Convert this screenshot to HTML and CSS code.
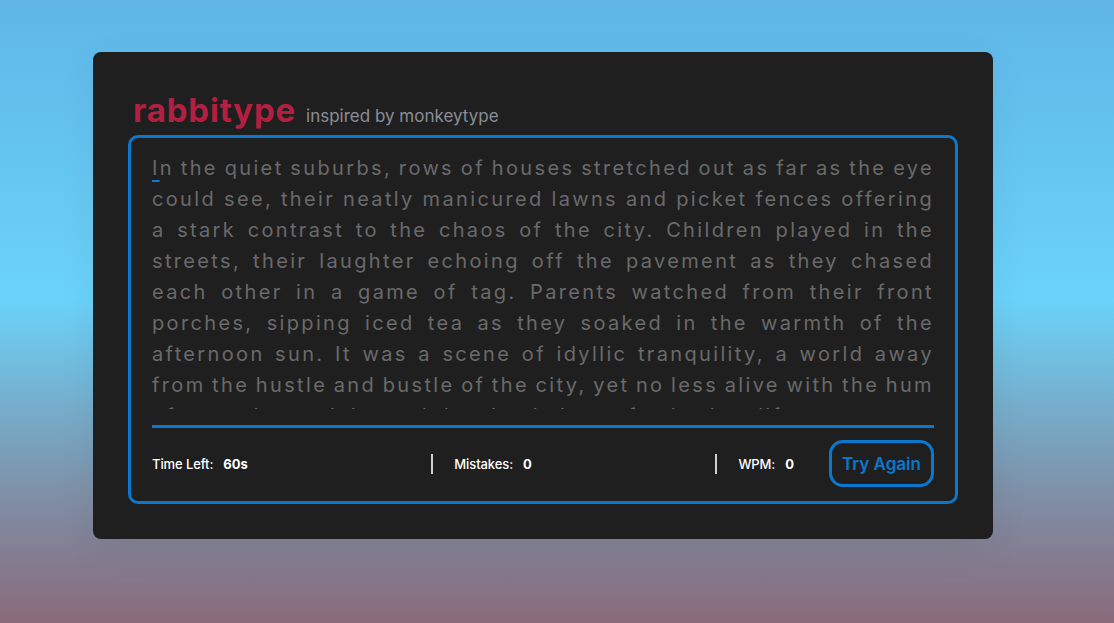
FILE: index.html
```html
<!DOCTYPE html>
<html lang="en">
<head>
<meta charset="utf-8">
<title>rabbitype</title>
<link rel="stylesheet" href="styles.css">
</head>
<body>
<div class="wrapper">
  <header class="brand">
    <h1 class="logo">rabbitype</h1>
    <span class="tagline">inspired by monkeytype</span>
  </header>
  <div class="typing-box">
    <div class="text-area">
      <p class="quote"><span class="active">I</span>n the quiet suburbs, rows of houses stretched out as far as the eye could see, their neatly manicured lawns and picket fences offering a stark contrast to the chaos of the city. Children played in the streets, their laughter echoing off the pavement as they chased each other in a game of tag. Parents watched from their front porches, sipping iced tea as they soaked in the warmth of the afternoon sun. It was a scene of idyllic tranquility, a world away from the hustle and bustle of the city, yet no less alive with the hum of everyday activity and the simple joys of suburban life.</p>
    </div>
    <div class="divider"></div>
    <div class="content">
      <ul class="result-details">
        <li class="stat"><span class="label">Time Left:</span><b class="value">60s</b></li>
        <li class="stat"><span class="label">Mistakes:</span><b class="value">0</b></li>
        <li class="stat"><span class="label">WPM:</span><b class="value">0</b></li>
      </ul>
      <button class="retry">Try Again</button>
    </div>
  </div>
</div>
</body>
</html>
```
FILE: styles.css
```css
* {
  box-sizing: border-box;
  margin: 0;
  padding: 0;
}

html, body {
  height: 100%;
}

body {
  font-family: "Inter", "Open Sans", sans-serif;
  background: linear-gradient(to bottom, #5fb6e7 0%, #6bd3fa 48%, #7f8ea5 80%, #896a79 100%);
  padding: 52px 0 0 93px;
}

.wrapper {
  width: 900px;
  background: #1f1f1f;
  border-radius: 8px;
  padding: 35px;
  box-shadow: 0 10px 40px rgba(0, 0, 0, 0.06);
}

.brand {
  display: flex;
  align-items: baseline;
  gap: 10px;
  padding-left: 5px;
  height: 48px;
  line-height: 46px;
}

.logo {
  font-size: 33px;
  font-weight: 700;
  color: #b21f40;
  letter-spacing: 0.8px;
}

.tagline {
  font-size: 17px;
  color: #8a8e98;
}

.typing-box {
  border: 3px solid #0a78cf;
  border-radius: 10px;
  padding: 0 21px 14px 21px;
}

.text-area {
  margin-top: 15px;
  height: 256px;
  overflow: hidden;
}

.quote {
  font-size: 20px;
  line-height: 31px;
  letter-spacing: 2.35px;
  word-spacing: -2px;
  text-align: justify;
  color: #6a6a6a;
}

.active {
  text-decoration: underline;
  text-decoration-color: #0a78cf;
  text-decoration-thickness: 2px;
  text-underline-offset: 5px;
}

.divider {
  margin-top: 16px;
  height: 3px;
  background: #0a78cf;
}

.content {
  margin-top: 12px;
  height: 47px;
  display: flex;
  align-items: center;
  justify-content: space-between;
}

.result-details {
  list-style: none;
  display: flex;
  justify-content: space-between;
  width: calc(100% - 140px);
}

.stat {
  display: flex;
  align-items: center;
  height: 20px;
  color: #ffffff;
}

.stat + .stat {
  border-left: 2px solid #cfcfcf;
  padding-left: 21px;
}

.label {
  font-size: 13px;
  font-weight: 500;
  letter-spacing: -0.1px;
}

.value {
  font-size: 13px;
  font-weight: 700;
  margin-left: 10px;
}

.retry {
  width: 105px;
  height: 47px;
  border: 3px solid #0a78cf;
  border-radius: 14px;
  background: transparent;
  color: #0a78cf;
  font-family: inherit;
  font-size: 17px;
  font-weight: 600;
  cursor: pointer;
}
```
